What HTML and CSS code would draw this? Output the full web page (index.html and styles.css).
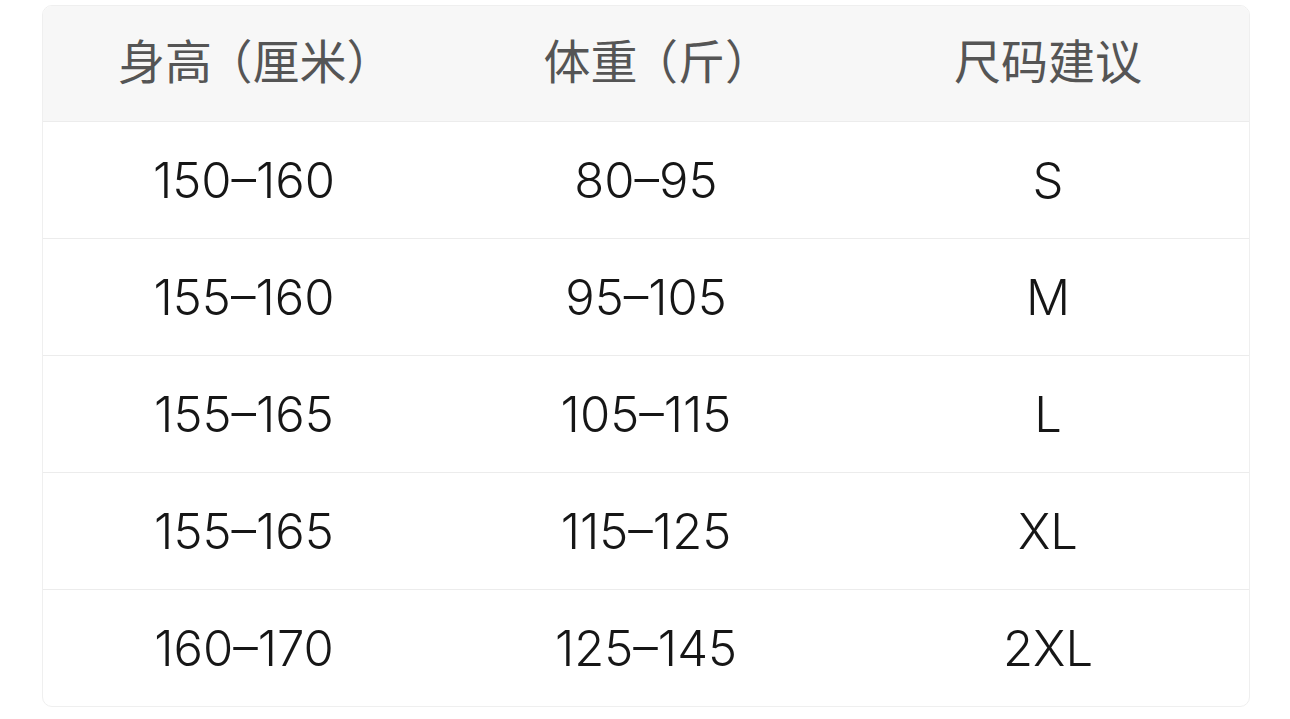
FILE: index.html
```html
<!DOCTYPE html>
<html lang="zh-CN">
<head>
<meta charset="utf-8">
<title>尺码表</title>
<link rel="stylesheet" href="styles.css">
</head>
<body>
<div class="size-table">
  <div class="row head">
    <div class="cell">身高<span class="op">（</span>厘米<span class="cp">）</span></div>
    <div class="cell">体重<span class="op">（</span>斤<span class="cp">）</span></div>
    <div class="cell">尺码建议</div>
  </div>
  <div class="row">
    <div class="cell">150–160</div>
    <div class="cell">80–95</div>
    <div class="cell">S</div>
  </div>
  <div class="row">
    <div class="cell">155–160</div>
    <div class="cell">95–105</div>
    <div class="cell">M</div>
  </div>
  <div class="row">
    <div class="cell">155–165</div>
    <div class="cell">105–115</div>
    <div class="cell">L</div>
  </div>
  <div class="row">
    <div class="cell">155–165</div>
    <div class="cell">115–125</div>
    <div class="cell">XL</div>
  </div>
  <div class="row">
    <div class="cell">160–170</div>
    <div class="cell">125–145</div>
    <div class="cell">2XL</div>
  </div>
</div>
</body>
</html>
```
FILE: styles.css
```css
html, body {
  margin: 0;
  padding: 0;
  background: #ffffff;
}
body {
  padding: 5px 0 0 42px;
  font-family: "Inter", "Noto Sans CJK SC", sans-serif;
}
.size-table {
  width: 1206px;
  border: 1px solid #efefef;
  border-radius: 10px;
  overflow: hidden;
  background: #fff;
}
.row {
  display: grid;
  grid-template-columns: 1fr 1fr 1fr;
  height: 117px;
  border-top: 1px solid #ececec;
  box-sizing: border-box;
}
.row.head {
  height: 115px;
  border-top: none;
  background: #f7f7f7;
}
.cell {
  display: flex;
  align-items: center;
  justify-content: center;
  font-size: 49px;
  font-weight: 300;
  color: #161616;
  white-space: nowrap;
}
.head .cell {
  font-family: "Noto Sans CJK SC", sans-serif;
  font-size: 47px;
  font-weight: 400;
  color: #555555;
  padding-bottom: 10px;
}
.op {
  font-feature-settings: "halt" 1;
  padding-left: 17px;
}
.cp {
  font-feature-settings: "halt" 1;
}
```
